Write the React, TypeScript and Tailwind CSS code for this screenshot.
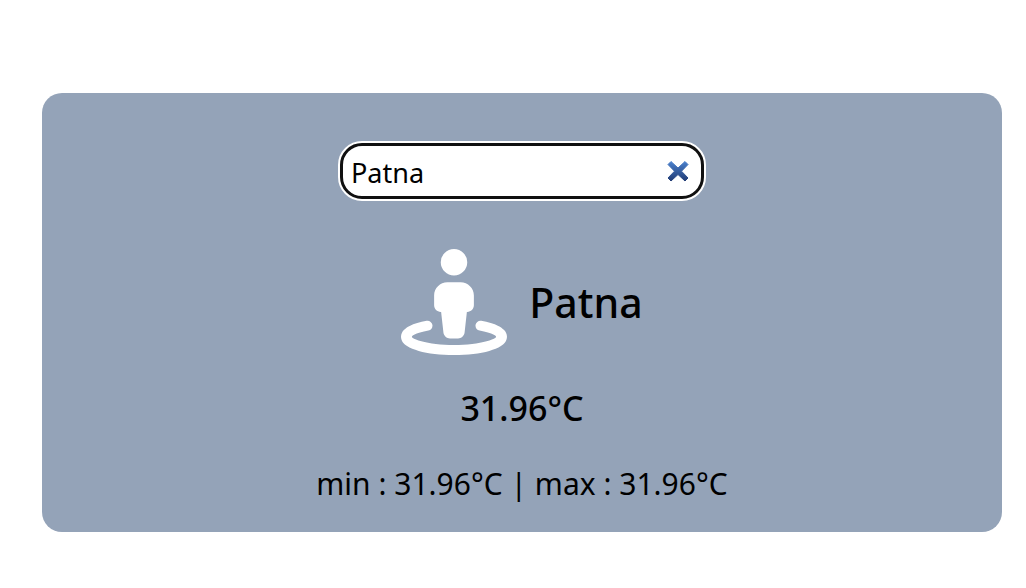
import { useState } from "react";
import { FaStreetView } from "react-icons/fa6";

export default function App() {
  const [city, setCity] = useState("Patna");
  return (
    <main className="pt-[93px] pr-6 pb-14 pl-[42px] font-['Noto_Sans',sans-serif] text-black">
      <section className="flex flex-col items-center rounded-[20px] bg-[#94a3b8] pt-12 pb-6">
        <div className="flex h-[60px] w-[368px] items-center rounded-[24px] border-2 border-white bg-white">
          <div className="flex h-full w-full items-center rounded-[22px] border-[3px] border-[#101010] pr-[11px] pl-2">
            <input
              type="text"
              aria-label="City"
              value={city}
              onChange={(e) => setCity(e.target.value)}
              className="min-w-0 flex-1 bg-transparent pt-1 text-[27px] leading-9 outline-none"
            />
            <button type="button" aria-label="Clear" onClick={() => setCity("")} className="h-6 w-6">
              <svg viewBox="0 0 24 24" className="h-6 w-6">
                <defs>
                  <linearGradient id="cross" x1="0" y1="0" x2="0" y2="1">
                    <stop offset="0" stopColor="#4a80cc" />
                    <stop offset="1" stopColor="#213c74" />
                  </linearGradient>
                </defs>
                <path fill="url(#cross)" d="M5 2.500 12 9 19 2.500 22 5.500 15.500 12.200 22 19 19 22 12 15.500 5 22 2 19 8.500 12.200 2 5.500Z" stroke="url(#cross)" strokeWidth="1" strokeLinejoin="round" />
              </svg>
            </button>
          </div>
        </div>
        <div className="mt-12 flex items-center gap-[22px]">
          <FaStreetView className="h-[106px] w-[106px] text-white" />
          <h1 className="text-[41px] leading-[56px] font-medium">Patna</h1>
        </div>
        <h2 className="mt-[31px] text-[34px] leading-[44px] font-medium">31.96°C</h2>
        <p className="mt-8 pb-0.5 text-[30px] leading-[44px]">min : 31.96°C | max : 31.96°C</p>
      </section>
    </main>
  );
}
